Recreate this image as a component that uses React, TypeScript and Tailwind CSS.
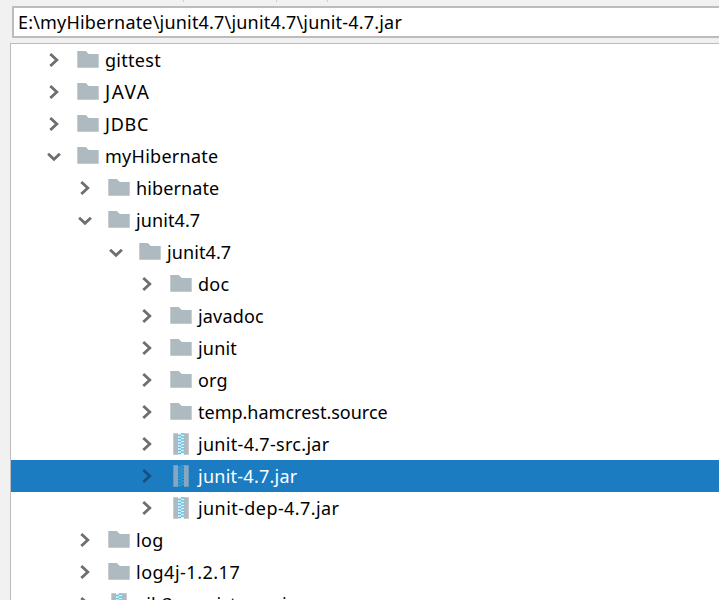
import React from "react";

type Row = { name: string; depth: number; kind?: "jar"; open?: boolean; selected?: boolean; tracking?: string };

const rows: Row[] = [
  { name: "gittest", depth: 0, tracking: "tracking-[0.28px]" },
  { name: "JAVA", depth: 0, tracking: "text-[19px] tracking-[1.5px]" },
  { name: "JDBC", depth: 0, tracking: "tracking-[0.75px]" },
  { name: "myHibernate", depth: 0, open: true, tracking: "tracking-[0.27px]" },
  { name: "hibernate", depth: 1, tracking: "tracking-[0.12px]" },
  { name: "junit4.7", depth: 1, open: true, tracking: "tracking-[0.1px]" },
  { name: "junit4.7", depth: 2, open: true, tracking: "tracking-[0.1px]" },
  { name: "doc", depth: 3, tracking: "tracking-[0.3px]" },
  { name: "javadoc", depth: 3, tracking: "tracking-[0.18px]" },
  { name: "junit", depth: 3, tracking: "tracking-[0.2px]" },
  { name: "org", depth: 3, tracking: "tracking-[0.2px]" },
  { name: "temp.hamcrest.source", depth: 3 },
  { name: "junit-4.7-src.jar", depth: 3, kind: "jar", tracking: "tracking-[0.3px]" },
  { name: "junit-4.7.jar", depth: 3, kind: "jar", selected: true, tracking: "tracking-[0.25px]" },
  { name: "junit-dep-4.7.jar", depth: 3, kind: "jar", tracking: "tracking-[0.42px]" },
  { name: "log", depth: 1, tracking: "tracking-[0.3px]" },
  { name: "log4j-1.2.17", depth: 1, tracking: "tracking-[0.5px]" },
  { name: "ejb3-persistence.jar", depth: 1, kind: "jar", tracking: "tracking-[0.13px]" },
];

const indents = ["pl-[35px]", "pl-[66px]", "pl-[97px]", "pl-[128px]"];

function Chevron({ open, selected }: { open?: boolean; selected?: boolean }) {
  return (
    <svg className="h-8 w-4 shrink-0" viewBox="0 0 16 32" fill="none" stroke={selected ? "#15507f" : "#6e6e6e"} strokeWidth="2.8">
      <path d={open ? "M2.1 13.8 L8 19.3 L13.9 13.8" : "M4.3 9.9 L10.8 16 L4.3 22.1"} />
    </svg>
  );
}

function Folder() {
  return (
    <svg className="h-8 w-[22px] shrink-0" viewBox="0 0 22 32">
      <path d="M0.3 7H8.8L11.8 10H21.7V23.7H0.3Z" fill="#aeb9c0" />
    </svg>
  );
}

const teeth = [0, 1, 2, 3, 4, 5, 6];

function Jar({ selected }: { selected?: boolean }) {
  return (
    <svg className="h-8 w-[22px] shrink-0" viewBox="0 0 22 32">
      <g opacity={selected ? 0.72 : 1}>
        <path d="M3.3 5.3H8V26.7H3.3ZM14 5.3H18.7V26.7H14Z" fill="#aeb9c0" />
        {teeth.map((i) => (
          <g key={i}>
            <path d={`M11 ${5.3 + i * 3}H14V${6.8 + i * 3}H11ZM8.2 ${6.8 + i * 3}H11V${8.3 + i * 3}H8.2Z`} fill="#40b6e0" opacity={0.9} />
            <path d={`M8.2 ${5.3 + i * 3}H11V${6.8 + i * 3}H8.2ZM11 ${6.8 + i * 3}H14V${8.3 + i * 3}H11Z`} fill="#40b6e0" opacity={0.18} />
          </g>
        ))}
      </g>
    </svg>
  );
}

export default function App() {
  return (
    <div className="flex h-[600px] w-[719px] flex-col overflow-hidden bg-[#f1f1f1] font-['Noto_Sans','Noto_Sans_CJK_SC',sans-serif] text-[18px] text-black">
      <div className="flex h-[6px] shrink-0">
        <div className="h-[2px] w-[184px] border-r border-[#cfcfcf]" />
        <div className="h-[2px] w-[93px] border-r border-[#cfcfcf]" />
        <div className="h-[2px] w-[51px] border-r border-[#cfcfcf]" />
      </div>
      <div className="ml-3 flex h-8 shrink-0 items-center border-y-2 border-l-2 border-[#bcbcbc] bg-white pl-1">
        <span className="whitespace-pre tracking-[0.19px]">{"E:\\myHibernate\\junit4.7\\junit4.7\\junit-4.7.jar"}</span>
      </div>
      <div className="mt-[5px] ml-[10px] flex-1 overflow-hidden border-t border-l border-[#bcbcbc] bg-white">
        {rows.map((r, i) => (
          <div key={i} className={`flex h-8 items-center ${indents[r.depth]} ${r.selected ? "bg-[#1b7cc2] text-white" : ""}`}>
            <Chevron open={r.open} selected={r.selected} />
            <div className="ml-[15px] flex">{r.kind === "jar" ? <Jar selected={r.selected} /> : <Folder />}</div>
            <span className={`ml-[6px] whitespace-nowrap ${r.tracking ?? ""}`}>{r.name}</span>
          </div>
        ))}
      </div>
    </div>
  );
}
